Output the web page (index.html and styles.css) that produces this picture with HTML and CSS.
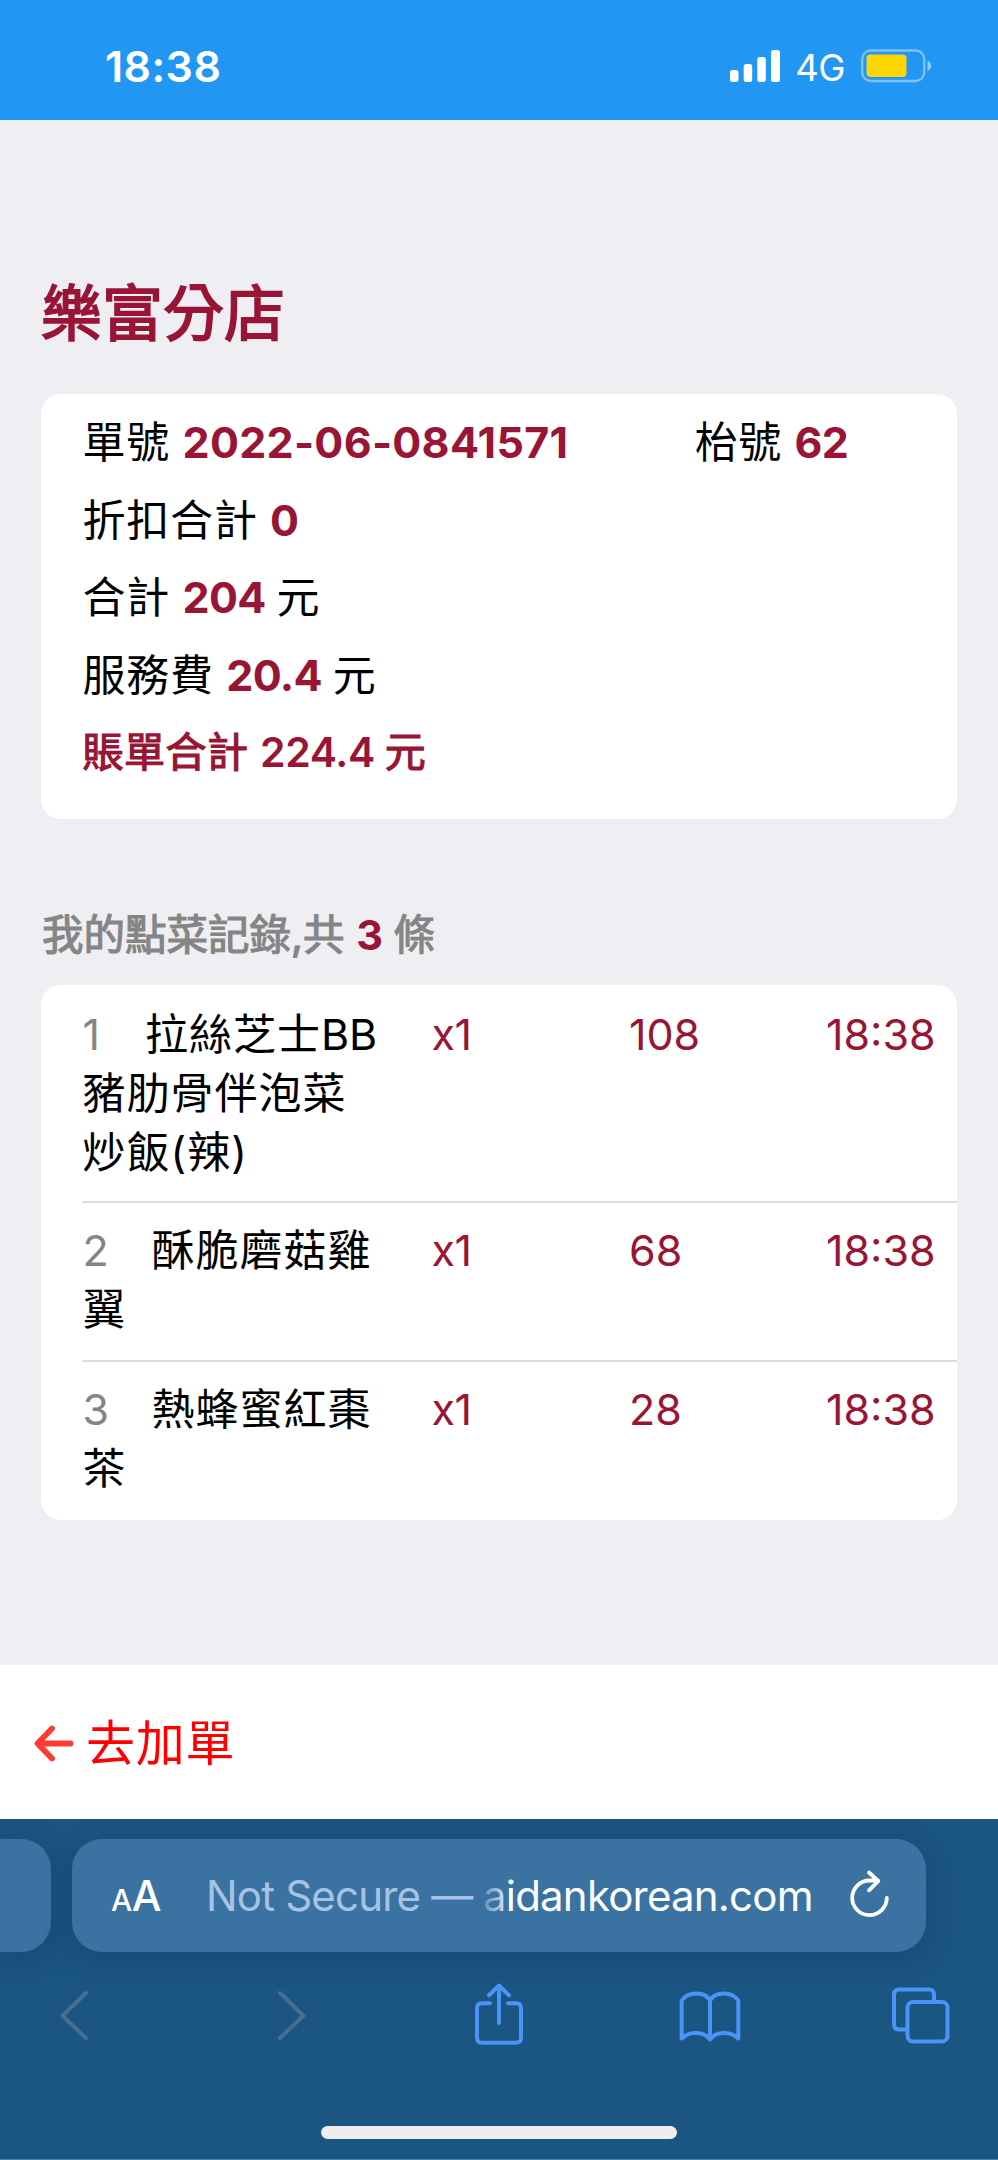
FILE: index.html
```html
<!DOCTYPE html>
<html lang="zh-Hant">
<head>
<meta charset="UTF-8">
<meta name="viewport" content="width=device-width, initial-scale=1">
<title>樂富分店</title>
<link rel="stylesheet" href="styles.css">
</head>
<body>

<!-- 狀態列 -->
<header class="status">
  <span class="clock">18:38</span>
  <div class="status-right">
    <svg class="signal" width="50" height="34" viewBox="0 0 50 34" fill="#fff">
      <rect x="0" y="21" width="8.5" height="12" rx="2.5"/>
      <rect x="13.7" y="15" width="8.5" height="18" rx="2.5"/>
      <rect x="27.3" y="8" width="8.5" height="25" rx="2.5"/>
      <rect x="41" y="1" width="9" height="32" rx="2.5"/>
    </svg>
    <span class="net">4G</span>
    <svg class="battery" width="70" height="34" viewBox="0 0 70 34">
      <rect x="1.2" y="1.5" width="62" height="30.5" rx="8.5" fill="none" stroke="#fff" stroke-opacity=".42" stroke-width="2.4"/>
      <rect x="5.5" y="5.5" width="40" height="22.5" rx="4" fill="#fed402"/>
      <path d="M66.5 11.5v10.5c5-2 5-8.5 0-10.5z" fill="#fff" fill-opacity=".5"/>
    </svg>
  </div>
</header>

<main>
  <h1>樂富分店</h1>

  <!-- 帳單 -->
  <section class="card bill">
    <div class="line"><p class="bill-no">單號 <b>2022-06-0841571</b></p><p>枱號 <b>62</b></p></div>
    <div class="line"><p>折扣合計 <b>0</b></p></div>
    <div class="line"><p>合計 <b>204</b> 元</p></div>
    <div class="line"><p>服務費 <b>20.4</b> 元</p></div>
    <div class="line total"><p>賬單合計 <b>224.4</b> 元</p></div>
  </section>

  <h2>我的點菜記錄,共 <b>3</b> 條</h2>

  <!-- 點菜記錄 -->
  <ul class="card orders">
    <li>
      <div class="name"><span class="idx one">1</span>拉絲芝士<span class="lat">BB</span><br>豬肋骨伴泡菜<br>炒飯(辣)</div>
      <span class="qty">x1</span><span class="price">108</span><span class="time">18:38</span>
    </li>
    <li>
      <div class="name"><span class="idx">2</span>酥脆磨菇雞<br>翼</div>
      <span class="qty">x1</span><span class="price">68</span><span class="time">18:38</span>
    </li>
    <li>
      <div class="name"><span class="idx">3</span>熱蜂蜜紅棗<br>茶</div>
      <span class="qty">x1</span><span class="price">28</span><span class="time">18:38</span>
    </li>
  </ul>
</main>

<!-- 返回加單 -->
<div class="back-bar">
  <svg width="40" height="38" viewBox="0 0 40 38" fill="none" stroke="#ff3b30" stroke-width="5.8" stroke-linecap="round" stroke-linejoin="round">
    <path d="M18 5.5 3.5 20.5l14.5 15M4 20.5h32.5"/>
  </svg>
  <a>去加單</a>
</div>

<!-- 瀏覽器工具列 -->
<footer class="browser">
  <div class="tabs">
    <div class="tab prev"></div>
    <div class="tab url">
      <span class="aa"><small>A</small>A</span>
      <span class="insecure">Not Secure —</span>
      <span class="host"><i>a</i>idankorean.com</span>
      <svg class="reload" width="42" height="50" viewBox="0 0 42 50" fill="none" stroke="#fff" stroke-width="3.8" stroke-linecap="round" stroke-linejoin="round">
        <path d="M37.8 29A17.3 17.3 0 1 1 20.5 11.5H29M20 3.5l9.3 8.7L20 21.3"/>
      </svg>
    </div>
  </div>
  <nav class="tools">
    <svg class="off" viewBox="0 0 60 70"><path d="M42 13 18.5 35.7 42 58"/></svg>
    <svg class="off" viewBox="0 0 60 70"><path d="M24 13 47.5 35.7 24 58"/></svg>
    <svg viewBox="0 0 60 70"><path d="M23 23.3h-8q-5 0-5 5v29.5q0 5 5 5h34q5 0 5-5v-29.5q0-5-5-5h-8M32 43V5.5M22 15.3 32 5.5l10 9.8"/></svg>
    <svg viewBox="0 0 60 70"><path d="M31 20.5C26 11 9 11 2.7 20.5V58.5C10 51 25 51 31 59.5 37 51 52 51 59.3 58.5V20.5C53 11 36 11 31 20.5V59"/></svg>
    <svg viewBox="0 0 60 70"><path d="M17 49.5H9q-5 0-5-5.5V15q0-5.5 5-5.5H39q5 0 5 5.5V21"/><rect x="17.5" y="22" width="40" height="39.5" rx="5.5"/></svg>
  </nav>
  <div class="home"></div>
</footer>

</body>
</html>
```
FILE: styles.css
```css
/* 共用 */
*{box-sizing:border-box;margin:0;padding:0}
:root{--bg:#efeef3;--main:#981536;--gray:#858585;--bar:#1b5581;--tab:#3a73a1;--blue:#4a93f8}
body{width:998px;height:2160px;overflow:hidden;background:var(--bg);color:#000;
     font-family:Inter,"Noto Sans CJK TC",sans-serif;font-size:43px;
     display:flex;flex-direction:column}
svg{display:block;flex:none;overflow:visible}
ul{list-style:none}

/* 狀態列 */
.status{height:120px;flex:none;background:#2196f3;color:#fff;
        display:flex;justify-content:space-between;padding:40px 67px 0 105px}
.clock{font-weight:600;line-height:52px;letter-spacing:.4px}
.status-right{display:flex;align-items:flex-start;padding-top:9px}
.net{font-size:36.5px;line-height:44px;margin:-3px 16px 0 15px;letter-spacing:-.5px}

/* 內容 */
main{height:1545px;flex:none;padding:153px 41px 0}
h1{font-size:61px;font-weight:400;line-height:82px;color:var(--main);margin-bottom:39px;
   -webkit-text-stroke:1.8px var(--main)}
.card{background:#fff;border-radius:20px}
.bill{height:425px;padding:10px 41.5px 0}
.line{display:flex;line-height:77.5px;letter-spacing:.8px;white-space:nowrap}
.line b{color:var(--main);font-weight:700;letter-spacing:-.7px;margin:0 -2px 0 -.5px}
.bill-no{width:612px}
.bill-no b{letter-spacing:.3px}
.total{font-size:41px;letter-spacing:.5px;color:var(--main);-webkit-text-stroke:1.2px var(--main)}
.total b{font-weight:600;letter-spacing:-.4px;-webkit-text-stroke:0}
h2{font-size:41.5px;font-weight:400;line-height:60px;color:var(--gray);margin:86px 0 20px 1px;
   -webkit-text-stroke:1.2px var(--gray)}
h2 b{color:var(--main);font-weight:700;margin:0 -1px 0 0;-webkit-text-stroke:0}

/* 點菜列表 */
.orders{height:535px;padding-left:41px}
.orders li{display:flex;padding:19.5px 0 19.5px .5px;line-height:59px;border-bottom:2px solid #dcdcde}
.orders li + li{padding:18.4px 0 20.6px .5px}
.orders li:last-child{border-bottom:0}
.name{width:349px;letter-spacing:1px;white-space:nowrap}
.idx{display:inline-block;width:69px;color:var(--gray)}
.idx.one{width:62.5px}
.lat{letter-spacing:-.2px}
.qty,.price,.time{color:var(--main)}
.qty{width:197.5px;letter-spacing:-.5px}
.price{width:197px}

/* 加單列 */
.back-bar{height:154px;flex:none;background:#fff;display:flex;align-items:center;
          padding-left:34px;color:#f00;font-size:49px}
.back-bar a{margin:-6px 0 0 12px;letter-spacing:.8px}

/* 瀏覽器 */
.browser{flex:1;background:var(--bar);padding-top:20px;border-bottom:1px solid #4b84aa}
.tabs{display:flex;gap:21px}
.tab{height:113px;background:var(--tab);box-shadow:0 6px 28px rgba(10,40,90,.28)}
.prev{width:51px;border-radius:0 30px 30px 0}
.url{width:854px;border-radius:30px;display:flex;align-items:center;padding:0 35px 0 39px;color:#fff}
.aa{font-size:42px;display:flex;align-items:baseline;width:95px;font-weight:500;letter-spacing:-.5px}
.aa small{font-size:30px}
.insecure{color:#a6c3e3;width:277px;white-space:nowrap;font-size:42px;letter-spacing:-.8px}
.host{width:366px;white-space:nowrap;font-size:42px;letter-spacing:-.8px}
.host i{font-style:normal;background:linear-gradient(90deg,#5d8db5,#d5e4f2);
        -webkit-background-clip:text;background-clip:text;color:transparent}
.reload{margin-top:-4px}
.tools{display:flex;justify-content:space-between;padding:0 48px 0 44px;margin-top:28px}
.tools svg{width:60px;height:70px;fill:none;stroke:var(--blue);stroke-width:4;
           stroke-linecap:round;stroke-linejoin:round}
.tools svg.off{stroke:#456f90}
.home{width:356px;height:13px;border-radius:7px;background:#f0eeed;margin:76px auto 0}
```
